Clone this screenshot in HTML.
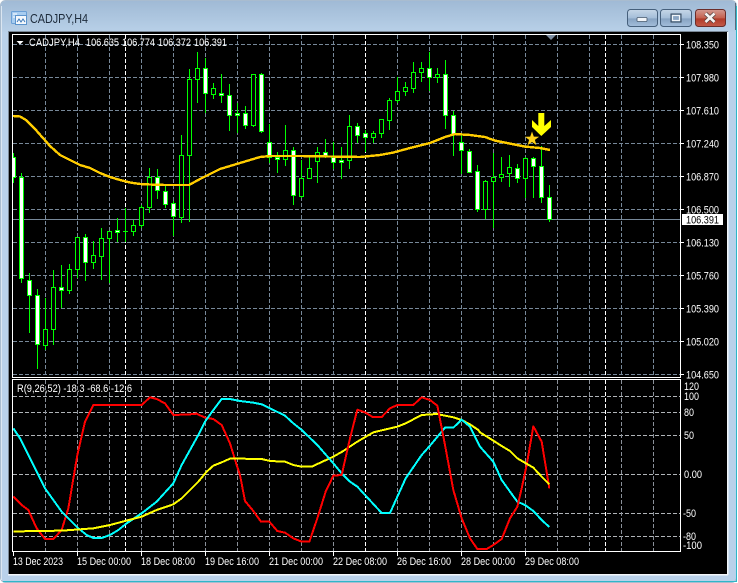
<!DOCTYPE html>
<html><head><meta charset="utf-8"><title>CADJPY,H4</title>
<style>html,body{margin:0;padding:0;background:#fff;width:738px;height:583px;overflow:hidden}svg{display:block}
text{font-family:"Liberation Sans",sans-serif;font-size:11px;fill:#fff}</style></head>
<body>
<svg width="738" height="583" viewBox="0 0 738 583" xmlns="http://www.w3.org/2000/svg">
<defs>
<linearGradient id="tb" x1="0" y1="0" x2="0" y2="1"><stop offset="0" stop-color="#a0bad5"/><stop offset="1" stop-color="#b8d0e8"/></linearGradient>
<linearGradient id="bt" x1="0" y1="0" x2="0" y2="1"><stop offset="0" stop-color="#c6d7e8"/><stop offset=".5" stop-color="#a4bdd8"/><stop offset=".55" stop-color="#87a3c2"/><stop offset="1" stop-color="#a3bedb"/></linearGradient>
<linearGradient id="cl" x1="0" y1="0" x2="0" y2="1"><stop offset="0" stop-color="#d49a91"/><stop offset=".5" stop-color="#c4604f"/><stop offset=".55" stop-color="#b03a29"/><stop offset="1" stop-color="#c45a49"/></linearGradient>
<clipPath id="ch"><rect x="13" y="35" width="667" height="342"/></clipPath>
<clipPath id="in"><rect x="13" y="380" width="667" height="171"/></clipPath>
</defs>
<!-- frame -->
<rect x="0.5" y="0.5" width="736" height="582" rx="5" fill="#b9d1ea" stroke="#a9bccf"/>
<path d="M1 32V6q0-5 5-5H731q5 0 5 5V32z" fill="url(#tb)"/>
<path d="M736.5 6V581.5H3" fill="none" stroke="#2fb6c8"/>
<path d="M735.5 3V30" stroke="#5a6b7c"/>
<path d="M1.5 6V580" stroke="#dbe6f1"/>
<rect x="8" y="31" width="720" height="544" fill="#7a8896"/>
<rect x="8" y="574" width="720" height="1.5" fill="#f2f6fa"/>
<rect x="727" y="32" width="1.5" height="543" fill="#f2f6fa"/>
<rect x="9" y="32" width="718" height="542" fill="#000"/>
<!-- title bar -->
<rect x="11.5" y="11.5" width="15" height="12" rx="1" fill="#a8cdf0" stroke="#6a9fd6"/>
<rect x="15.5" y="15.5" width="11" height="9" fill="#f4f8fc" stroke="#5b93cc"/>
<path d="M17 22l2-3 2 3 2-3 2 3" fill="none" stroke="#3b78b8"/>
<path d="M13 14h4M13 17h2" stroke="#fff"/>
<text x="30" y="23" textLength="58" lengthAdjust="spacingAndGlyphs" style="font-size:12.5px;fill:#1c2a3a">CADJPY,H4</text>
<!-- buttons -->
<rect x="627.5" y="9.5" width="30" height="17" rx="3" fill="url(#bt)" stroke="#46607c"/>
<rect x="637" y="17.5" width="10" height="4" rx="1" fill="#f1f5f9" stroke="#46586c" stroke-width=".8"/>
<rect x="660.5" y="9.5" width="31" height="17" rx="3" fill="url(#bt)" stroke="#46607c"/>
<rect x="671" y="14" width="10" height="8" fill="#8aa5c3" stroke="#33465a" stroke-width="1"/>
<rect x="672.500" y="15.500" width="7" height="5" fill="none" stroke="#f1f5f9" stroke-width="1.200"/>
<rect x="695.5" y="9.5" width="30" height="17" rx="3" fill="url(#cl)" stroke="#6b2d2a"/>
<path d="M705.5 13.5l9 8.5M714.5 13.5l-9 8.5" stroke="#4a3a3a" stroke-width="4"/>
<path d="M705.5 13.5l9 8.5M714.5 13.5l-9 8.5" stroke="#f6f3f2" stroke-width="2.6"/>
<!-- main grid -->
<g fill="none" stroke="#778899" stroke-dasharray="4 2">
<path d="M13 44.5H680M13 77.5H680M13 110.5H680M13 143.5H680M13 176.5H680M13 209.5H680M13 242.5H680M13 275.5H680M13 308.5H680M13 341.5H680M13 374.5H680"/>
<path d="M45.5 35V377M77.5 35V377M109.5 35V377M141.5 35V377M173.5 35V377M205.5 35V377M237.5 35V377M269.5 35V377M301.5 35V377M333.5 35V377M397.5 35V377M429.5 35V377M461.5 35V377M493.5 35V377M525.5 35V377M557.5 35V377M589.5 35V377M621.5 35V377M653.5 35V377"/>
</g>
<path d="M125.5 35V377M365.5 35V377M605.5 35V377" stroke="#fff" stroke-dasharray="4 2" fill="none"/>
<path d="M13 219.5H681" stroke="#778899"/>
<!-- candles -->
<g clip-path="url(#ch)">
<path fill="none" stroke="#00ff00" d="M13.5 153V183M21.5 173V283M29.5 273V333M37.5 289V369M45.5 298V350M53.5 270V345M61.5 265V308M69.5 264V294M77.5 237V278M85.5 234V281M93.5 241V269M101.5 228V280M109.5 231V283M117.5 218V242M125.5 208V242M133.5 220V236M141.5 205V228M149.5 168V213M157.5 169V199M165.5 185V208M173.5 201V236M181.5 135V223M189.5 69V222M197.5 52V103M205.5 58V113M213.5 83V99M221.5 74V103M229.5 84V131M237.5 103V133M245.5 106V129M253.5 74V127M261.5 73V133M269.5 124V163M277.5 152V173M285.5 125V166M293.5 147V205M301.5 160V198M309.5 155V178M317.5 147V183M325.5 139V158M333.5 142V169M341.5 147V179M349.5 115V169M357.5 123V143M365.5 130V152M373.5 131V143M381.5 119V138M389.5 98V130M397.5 77V103M405.5 82V96M413.5 62V93M421.5 62V82M429.5 52V91M437.5 68V83M445.5 60V129M453.5 111V156M461.5 135V174M469.5 149V172M477.5 165V212M485.5 180V219M493.5 153V228M501.5 157V182M509.5 155V187M517.5 164V183M525.5 157V198M533.5 157V198M541.5 146V203M549.5 185V222M123 231.5H128"/>
<path fill="#fff" stroke="#00ff00" d="M11.5 157.5h4V177.5h-4zM19.5 177.5h4V278.5h-4zM27.5 280.5h4V295.5h-4zM35.5 295.5h4V344.5h-4zM59.5 287.5h4V290.5h-4zM83.5 237.5h4V262.5h-4zM115.5 230.5h4V232.5h-4zM155.5 177.5h4V190.5h-4zM163.5 191.5h4V204.5h-4zM171.5 203.5h4V216.5h-4zM203.5 68.5h4V93.5h-4zM219.5 93.5h4V95.5h-4zM227.5 95.5h4V115.5h-4zM235.5 113.5h4V115.5h-4zM243.5 113.5h4V125.5h-4zM259.5 74.5h4V131.5h-4zM267.5 142.5h4V157.5h-4zM275.5 157.5h4V159.5h-4zM291.5 150.5h4V195.5h-4zM323.5 152.5h4V156.5h-4zM331.5 157.5h4V162.5h-4zM339.5 160.5h4V162.5h-4zM355.5 126.5h4V135.5h-4zM363.5 133.5h4V137.5h-4zM427.5 68.5h4V77.5h-4zM443.5 74.5h4V115.5h-4zM451.5 115.5h4V134.5h-4zM459.5 142.5h4V150.5h-4zM467.5 151.5h4V172.5h-4zM475.5 171.5h4V209.5h-4zM515.5 168.5h4V178.5h-4zM531.5 158.5h4V166.5h-4zM539.5 166.5h4V197.5h-4zM547.5 197.5h4V219.5h-4z"/>
<path fill="#000" stroke="#00ff00" d="M43.5 329.5h4V345.5h-4zM51.5 287.5h4V329.5h-4zM67.5 269.5h4V290.5h-4zM75.5 237.5h4V269.5h-4zM91.5 255.5h4V262.5h-4zM99.5 238.5h4V256.5h-4zM107.5 231.5h4V238.5h-4zM131.5 225.5h4V231.5h-4zM139.5 207.5h4V225.5h-4zM147.5 177.5h4V207.5h-4zM179.5 155.5h4V217.5h-4zM187.5 79.5h4V155.5h-4zM195.5 68.5h4V79.5h-4zM211.5 88.5h4V94.5h-4zM251.5 74.5h4V125.5h-4zM283.5 150.5h4V159.5h-4zM299.5 178.5h4V196.5h-4zM307.5 168.5h4V178.5h-4zM315.5 152.5h4V161.5h-4zM347.5 126.5h4V160.5h-4zM371.5 133.5h4V137.5h-4zM379.5 119.5h4V133.5h-4zM387.5 100.5h4V120.5h-4zM395.5 91.5h4V100.5h-4zM403.5 87.5h4V91.5h-4zM411.5 72.5h4V88.5h-4zM419.5 68.5h4V72.5h-4zM435.5 74.5h4V77.5h-4zM483.5 181.5h4V209.5h-4zM491.5 177.5h4V181.5h-4zM499.5 174.5h4V177.5h-4zM507.5 167.5h4V173.5h-4zM523.5 158.5h4V178.5h-4z"/>
<!-- MA -->
<polyline fill="none" stroke="#ffcc00" stroke-width="2.4" shape-rendering="crispEdges" points="13,116 20,116.5 26,120 35,129 50,146 60,155 70,160 80,165 90,168 100,173 110,177 120,180 130,182.5 140,184 150,184.5 165,185 189,185 200,179 220,169 240,163 260,157 270,156 300,156 360,157 380,155 393,152.6 410,148 430,143 445,137 455,134 470,135 485,137 495,140.6 510,143.6 525,146.6 540,148 550,150"/>
<polygon fill="#ffd21a" points="532,131.5 533.8,136.6 539.1,136.7 534.9,139.9 536.4,145.1 532,142 527.6,145.1 529.1,139.9 524.9,136.7 530.2,136.6"/>
<polygon fill="#ffff00" points="538.3,113 544.3,113 544.3,126 551,120 551,127 541.3,136 532,127 532,120 538.3,126"/>
</g>
<path d="M546 35h10l-5 5z" fill="#7b8ca0"/>
<path d="M16.5 41h7l-3.5 3.500z" fill="#fff"/>
<text x="29" y="46" textLength="51" lengthAdjust="spacingAndGlyphs">CADJPY,H4</text>
<text x="86" y="46" textLength="33" lengthAdjust="spacingAndGlyphs">106.635</text>
<text x="122" y="46" textLength="33" lengthAdjust="spacingAndGlyphs">106.774</text>
<text x="158" y="46" textLength="33" lengthAdjust="spacingAndGlyphs">106.372</text>
<text x="194" y="46" textLength="33" lengthAdjust="spacingAndGlyphs">106.391</text>
<!-- indicator grid -->
<path fill="none" stroke="#b0b4b8" stroke-dasharray="4 2" d="M13 396.500H680M13 412.500H680M13 435.500H680M13 474.500H680M13 513.500H680M13 536.500H680"/>
<path fill="none" stroke="#8a9099" stroke-dasharray="4 2" d="M45.500 380V551M77.500 380V551M109.500 380V551M141.500 380V551M173.500 380V551M205.500 380V551M237.500 380V551M269.500 380V551M301.500 380V551M333.500 380V551M397.500 380V551M429.500 380V551M461.500 380V551M493.500 380V551M525.500 380V551M557.500 380V551M589.500 380V551M621.500 380V551M653.500 380V551"/>
<path fill="none" stroke="#fff" stroke-dasharray="4 2" d="M125.500 380V551M365.500 380V551M605.500 380V551"/>
<!-- indicator lines -->
<g clip-path="url(#in)" fill="none" stroke-width="6" stroke-linejoin="round" shape-rendering="crispEdges">
<g transform="translate(0 375) scale(.33333)">
<polyline stroke="#ff0000" points="40,365 65,390 85,405 110,460 135,492 160,492 185,465 205,400 232,240 255,140 280,90 425,90 450,67 470,72 495,85 520,120 570,118 590,116 615,128 640,132 665,150 690,205 710,270 720,300"/>
<polyline stroke="#00ffff" points="40,160 60,190 85,240 110,290 135,340 160,375 185,410 210,435 235,460 260,480 280,489 305,489 330,480 355,465 380,445 425,415 470,380 520,325 545,270 570,225 595,180 615,140 640,105 665,72 690,72 720,78"/>
<polyline stroke="#ffff00" points="40,470 65,469 100,468 185,467 280,460 330,450 375,438 425,425 470,405 520,388 545,370 570,345 595,320 620,290 640,272 665,262 690,251 720,251"/>
</g>
<g transform="translate(240 375) scale(.33333)">
<polyline stroke="#ffff00" points="0,251 65,252 90,258 135,260 160,270 185,275 215,275 280,245 310,228 352,200 400,172 425,166 472,155 497,145 545,120 590,117 640,127 665,135 690,148 715,165 720,172"/>
<polyline stroke="#00ffff" points="0,78 40,83 65,88 90,100 135,122 160,145 185,165 232,210 280,265 305,295 330,320 352,335 375,360 425,414 450,414 497,310 545,240 570,212 615,158 640,158 665,134 690,155 715,205 720,215"/>
<polyline stroke="#ff0000" points="0,300 15,378 40,408 63,440 88,440 112,468 135,473 160,490 185,500 208,500 232,430 257,350 280,302 305,300 330,190 352,104 375,112 398,126 425,126 450,100 472,90 520,90 545,67 570,75 592,92 615,210 640,345 665,430 690,490 712,522 720,522"/>
</g>
<g transform="translate(480 375) scale(.33333)">
<polyline stroke="#00ffff" points="0,215 40,260 65,315 90,350 112,380 135,390 160,408 185,435 208,456"/>
<polyline stroke="#ff0000" points="0,522 20,522 40,510 65,492 90,430 112,395 125,340 140,270 160,154 185,200 208,340"/>
<polyline stroke="#ffff00" points="0,172 40,197 65,213 90,228 112,250 160,278 185,305 208,328"/>
</g>
</g>
<text x="17" y="392" textLength="115" lengthAdjust="spacingAndGlyphs">R(9,26,52) -18.3 -68.6 -12.6</text>
<!-- borders -->
<path fill="none" stroke="#fff" d="M12.500 34.500H680.500V377.500H12.500zM12.500 379.500H680.500V551.500H12.500z"/>
<!-- ticks -->
<path stroke="#fff" d="M681 44.500h3M681 77.500h3M681 110.500h3M681 143.500h3M681 176.500h3M681 209.500h3M681 242.500h3M681 275.500h3M681 308.500h3M681 341.500h3M681 374.500h3M13.500 552v4M77.500 552v4M141.500 552v4M205.500 552v4M269.500 552v4M333.500 552v4M397.500 552v4M461.500 552v4M525.500 552v4"/>
<!-- price labels -->
<text x="686" y="48.500" textLength="33" lengthAdjust="spacingAndGlyphs">108.350</text>
<text x="686" y="81.500" textLength="33" lengthAdjust="spacingAndGlyphs">107.980</text>
<text x="686" y="114.500" textLength="33" lengthAdjust="spacingAndGlyphs">107.610</text>
<text x="686" y="147.500" textLength="33" lengthAdjust="spacingAndGlyphs">107.240</text>
<text x="686" y="180.500" textLength="33" lengthAdjust="spacingAndGlyphs">106.870</text>
<text x="686" y="213.500" textLength="33" lengthAdjust="spacingAndGlyphs">106.500</text>
<text x="686" y="246.500" textLength="33" lengthAdjust="spacingAndGlyphs">106.130</text>
<text x="686" y="279.500" textLength="33" lengthAdjust="spacingAndGlyphs">105.760</text>
<text x="686" y="312.500" textLength="33" lengthAdjust="spacingAndGlyphs">105.390</text>
<text x="686" y="345.500" textLength="33" lengthAdjust="spacingAndGlyphs">105.020</text>
<text x="686" y="378.500" textLength="33" lengthAdjust="spacingAndGlyphs">104.650</text>
<rect x="682" y="214" width="41" height="11" fill="#fff"/>
<text x="686" y="223.500" textLength="33" lengthAdjust="spacingAndGlyphs" style="fill:#000">106.391</text>
<!-- indicator labels -->
<text x="684" y="390" textLength="15" lengthAdjust="spacingAndGlyphs">120</text>
<text x="684" y="400" textLength="15" lengthAdjust="spacingAndGlyphs">100</text>
<text x="684" y="416" textLength="10" lengthAdjust="spacingAndGlyphs">80</text>
<text x="684" y="439" textLength="10" lengthAdjust="spacingAndGlyphs">50</text>
<text x="684" y="478" textLength="18" lengthAdjust="spacingAndGlyphs">0.00</text>
<text x="683" y="517" textLength="13" lengthAdjust="spacingAndGlyphs">-50</text>
<text x="683" y="540" textLength="13" lengthAdjust="spacingAndGlyphs">-80</text>
<text x="683" y="549" textLength="19" lengthAdjust="spacingAndGlyphs">-100</text>
<!-- date labels -->
<text x="13" y="565" textLength="50" lengthAdjust="spacingAndGlyphs">13 Dec 2023</text>
<text x="77" y="565" textLength="54" lengthAdjust="spacingAndGlyphs">15 Dec 00:00</text>
<text x="141" y="565" textLength="54" lengthAdjust="spacingAndGlyphs">18 Dec 08:00</text>
<text x="205" y="565" textLength="54" lengthAdjust="spacingAndGlyphs">19 Dec 16:00</text>
<text x="269" y="565" textLength="54" lengthAdjust="spacingAndGlyphs">21 Dec 00:00</text>
<text x="333" y="565" textLength="54" lengthAdjust="spacingAndGlyphs">22 Dec 08:00</text>
<text x="397" y="565" textLength="54" lengthAdjust="spacingAndGlyphs">26 Dec 16:00</text>
<text x="461" y="565" textLength="54" lengthAdjust="spacingAndGlyphs">28 Dec 00:00</text>
<text x="525" y="565" textLength="54" lengthAdjust="spacingAndGlyphs">29 Dec 08:00</text>
</svg>
</body></html>
